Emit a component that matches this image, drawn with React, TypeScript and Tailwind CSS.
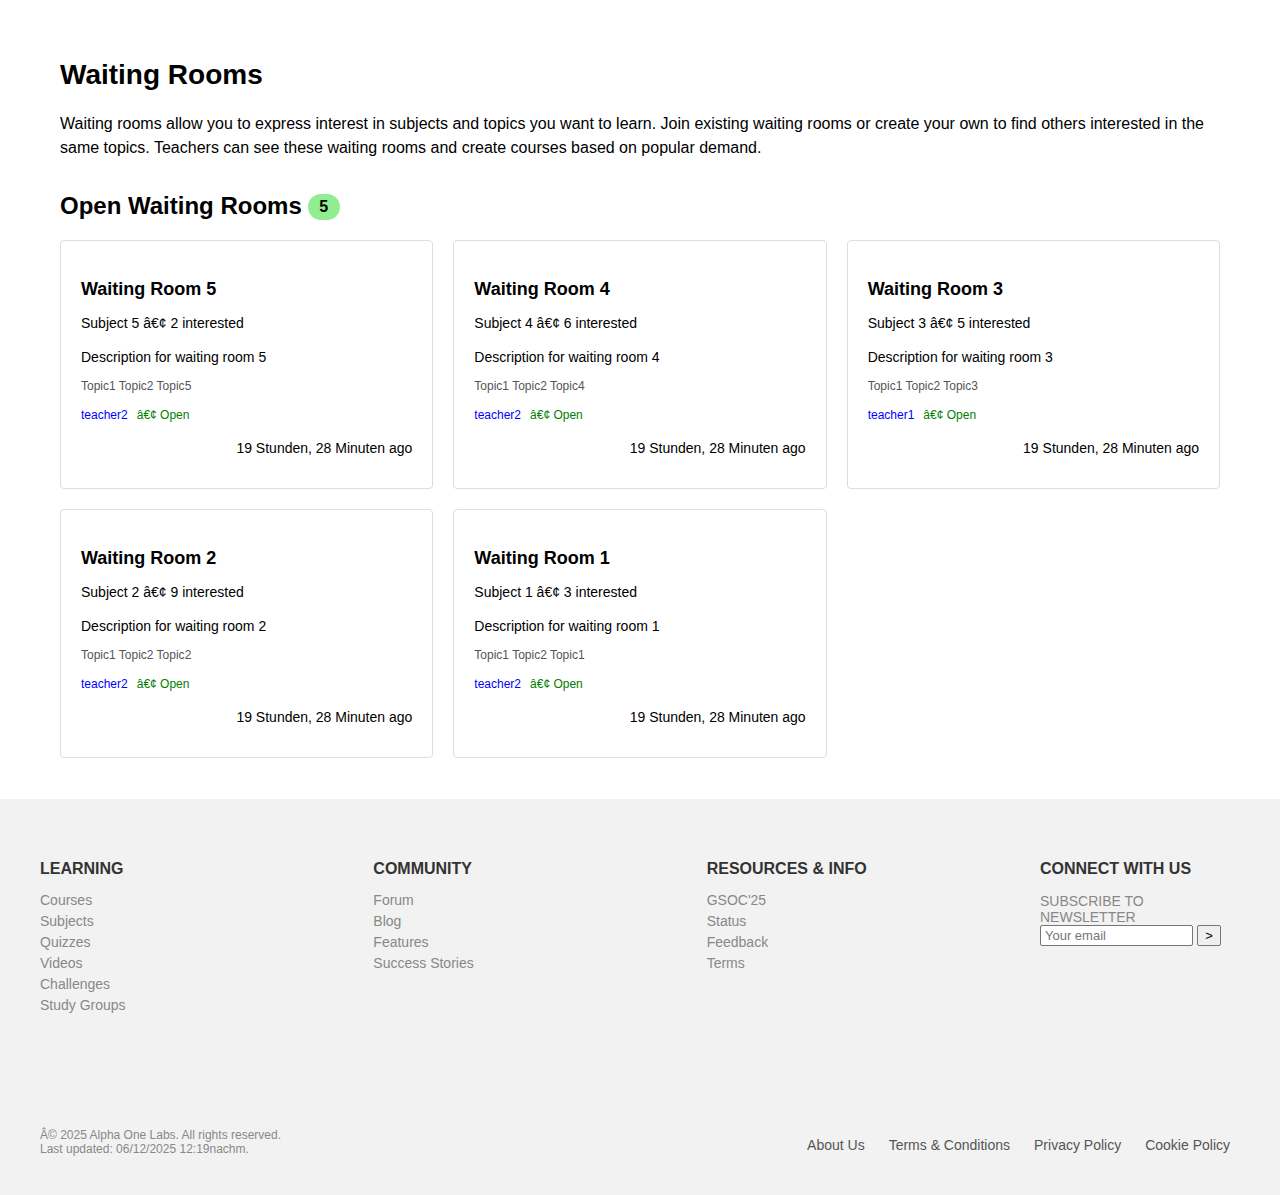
const rooms = [
  { n: 5, interested: 2, teacher: "teacher2" },
  { n: 4, interested: 6, teacher: "teacher2" },
  { n: 3, interested: 5, teacher: "teacher1" },
  { n: 2, interested: 9, teacher: "teacher2" },
  { n: 1, interested: 3, teacher: "teacher2" },
];

const footerCols = [
  { title: "LEARNING", links: ["Courses", "Subjects", "Quizzes", "Videos", "Challenges", "Study Groups"] },
  { title: "COMMUNITY", links: ["Forum", "Blog", "Features", "Success Stories"] },
  { title: "RESOURCES & INFO", links: ["GSOC'25", "Status", "Feedback", "Terms"] },
];

function RoomCard({ room }: { room: (typeof rooms)[number] }) {
  return (
    <div className="border border-[#dddddd] rounded-[4px] bg-white px-5 pt-5 pb-8">
      <h3 className="mt-[18px] text-[18px] leading-[21px] font-bold">Waiting Room {room.n}</h3>
      <p className="mt-[15px] text-[14px] leading-4">
        Subject {room.n} â€¢ {room.interested} interested
      </p>
      <p className="mt-[18px] text-[14px] leading-4">Description for waiting room {room.n}</p>
      <p className="mt-[14px] text-[12px] leading-[14px] text-[#555555]">Topic1 Topic2 Topic{room.n}</p>
      <p className="mt-[15px] text-[12px] leading-[14px]">
        <span className="text-[#0000ff]">{room.teacher}</span>
        <span className="ml-[9px] text-[#008000]">â€¢ Open</span>
      </p>
      <p className="mt-[18px] text-[14px] leading-4 text-right">19 Stunden, 28 Minuten ago</p>
    </div>
  );
}

export default function App() {
  return (
    <div className="font-['Liberation_Sans',Arial,sans-serif] text-black bg-white">
      {/* Main */}
      <main className="px-[60px] pt-[59px] pb-[41px]">
        <h1 className="text-[28px] leading-8 font-bold">Waiting Rooms</h1>
        <p className="mt-[21px] text-[16px] leading-6">
          Waiting rooms allow you to express interest in subjects and topics you want to learn. Join existing waiting
          rooms or create your own to find others interested in the same topics. Teachers can see these waiting rooms
          and create courses based on popular demand.
        </p>

        <div className="mt-[32px] flex items-end">
          <h2 className="text-[24px] leading-7 font-bold">Open Waiting Rooms</h2>
          <span className="ml-[6px] h-[26px] w-[32px] rounded-full bg-[#90ee90] flex items-center justify-center text-[16px] font-bold">
            5
          </span>
        </div>

        <div className="mt-5 grid grid-cols-3 gap-5">
          {rooms.map((r) => (
            <RoomCard key={r.n} room={r} />
          ))}
        </div>
      </main>

      {/* Footer */}
      <footer className="bg-[#f2f2f2] px-10 pt-[61px] pb-10">
        <div className="flex justify-between">
          {footerCols.map((col) => (
            <div key={col.title} className="w-[200px]">
              <h4 className="text-[16px] leading-[18px] font-bold text-[#333333]">{col.title}</h4>
              <ul className="mt-3">
                {col.links.map((l) => (
                  <li key={l} className="text-[14px] leading-[21px] text-[#888888]">
                    {l}
                  </li>
                ))}
              </ul>
            </div>
          ))}
          <div className="w-[200px]">
            <h4 className="text-[16px] leading-[18px] font-bold text-[#333333]">CONNECT WITH US</h4>
            <p className="mt-[15px] text-[14px] leading-4 text-[#888888]">SUBSCRIBE TO NEWSLETTER</p>
            <div className="flex gap-1">
              <input
                placeholder="Your email"
                className="w-[153px] h-[21px] bg-white border border-[#767676] rounded-[2px] px-1 text-[13px] placeholder:text-[#757575]"
              />
              <button className="w-[24px] h-[21px] bg-[#efefef] border border-[#767676] rounded-[2px] text-[13px] leading-none">
                &gt;
              </button>
            </div>
          </div>
        </div>

        <div className="mt-[112px] flex justify-between items-end pr-[10px]">
          <div className="text-[12px] leading-[14px] text-[#888888]">
            <p>Â© 2025 Alpha One Labs. All rights reserved.</p>
            <p>Last updated: 06/12/2025 12:19nachm.</p>
          </div>
          <div className="flex gap-6 text-[14px] leading-[21px] text-[#555555]">
            <span>About Us</span>
            <span>Terms &amp; Conditions</span>
            <span>Privacy Policy</span>
            <span>Cookie Policy</span>
          </div>
        </div>
      </footer>
    </div>
  );
}
